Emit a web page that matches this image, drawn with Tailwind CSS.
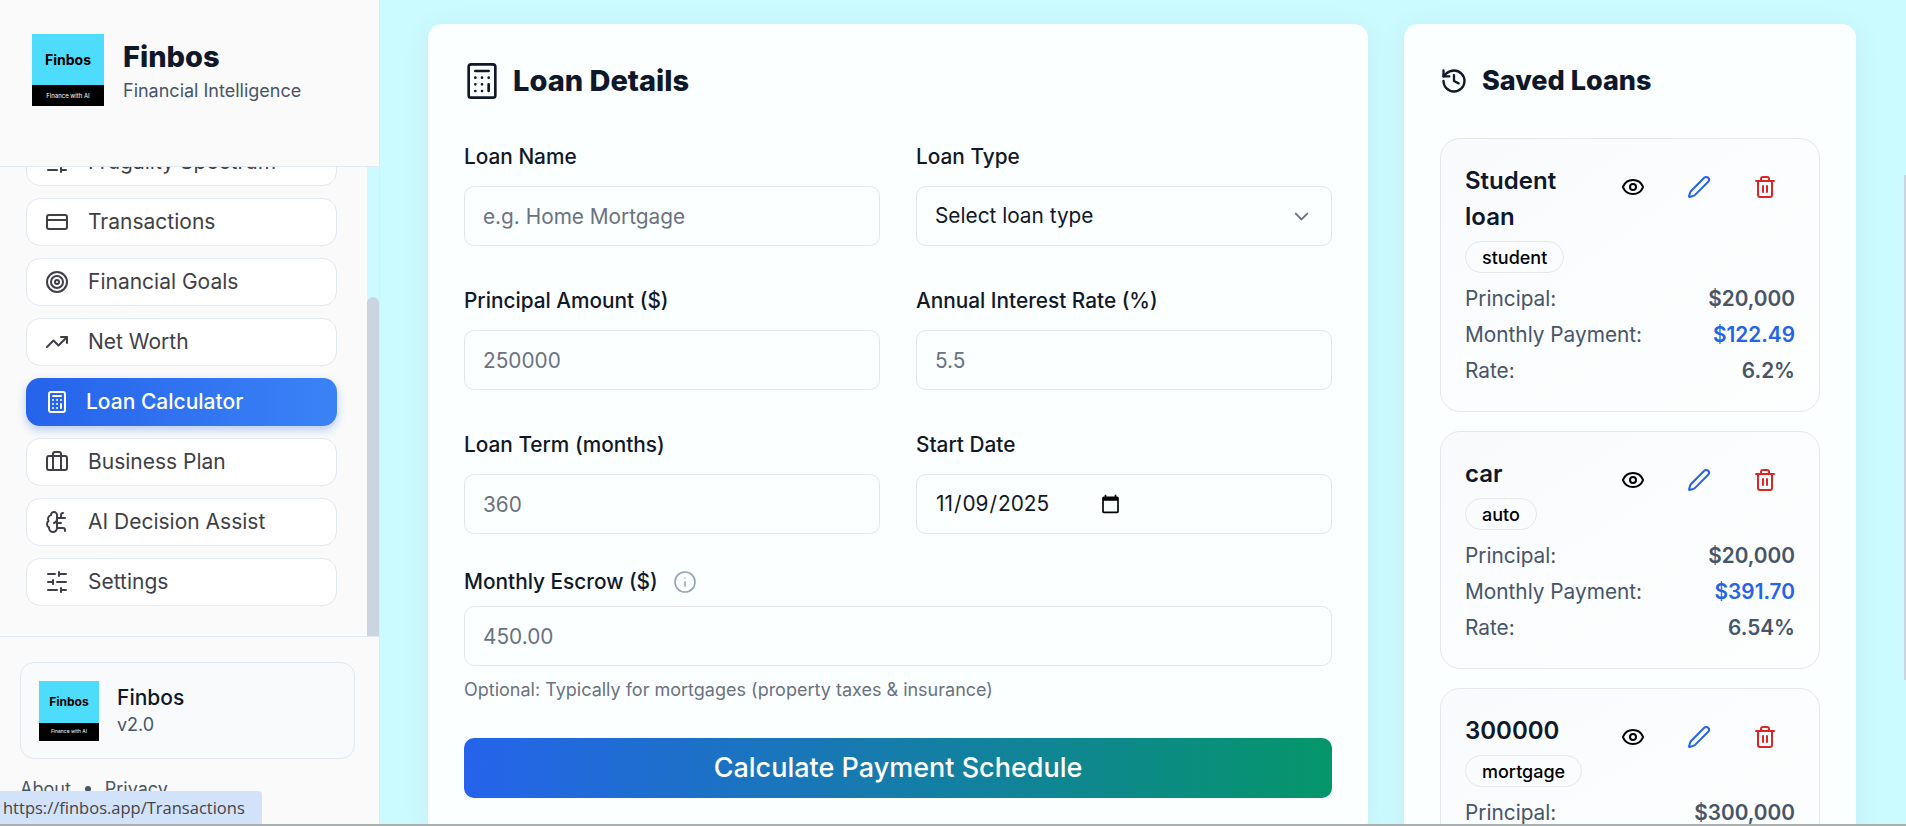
<!DOCTYPE html>
<html lang="en">
<head>
<meta charset="utf-8">
<title>Finbos Loan Calculator</title>
<script src="https://cdn.jsdelivr.net/npm/@tailwindcss/browser@4"></script>
</head>
<body class="h-screen overflow-hidden bg-[#ccfbff] font-['Inter',sans-serif]">
<div class="flex h-[824px] overflow-hidden">
  <aside class="flex flex-col w-[380px] shrink-0 h-full border-r border-[#e2e8f0] overflow-hidden">
    <div class="h-[167px] shrink-0 bg-[#fafafa] border-b border-[#e2e8f0] pt-[34px] pl-[32px] flex gap-[19px] z-10">
      <div class="w-[72px] h-[72px] flex flex-col shrink-0">
        <div class="h-[51px] bg-[#4ddcfb] flex items-center justify-center text-[14px] font-bold text-black">Finbos</div>
        <div class="h-[21px] bg-black flex items-center justify-center text-[6px] text-white">Finance with AI</div>
      </div>
      <div>
        <div class="text-[29px] leading-[38px] font-extrabold text-[#0f172a] mt-[4px]">Finbos</div>
        <div class="text-[18px] leading-[24px] text-[#475569] mt-[3px]">Financial Intelligence</div>
      </div>
    </div>
    <div class="flex-1 min-h-0 flex overflow-hidden">
      <nav class="w-[367px] shrink-0 bg-[#fafafa] overflow-hidden pl-[26px] pr-[30px]">
        <div class="flex flex-col gap-[12px] mt-[-29px] text-[21px] text-[#3f3f46]">
          <a class="h-[48px] rounded-[14px] bg-white border border-[#e2e8f0] flex items-center pl-[18px] gap-[19px]"><svg class="w-6 h-6" viewBox="0 0 24 24" fill="none" stroke="currentColor" stroke-width="2" stroke-linecap="round"><path d="M21 4h-7M10 4H3M21 12h-9M8 12H3M21 20h-5M12 20H3M14 2v4M8 10v4M16 18v4"/></svg>Frugality Spectrum</a>
          <a class="h-[48px] rounded-[14px] bg-white border border-[#e2e8f0] flex items-center pl-[18px] gap-[19px]"><svg class="w-6 h-6" viewBox="0 0 24 24" fill="none" stroke="currentColor" stroke-width="2" stroke-linecap="round"><rect x="2" y="5" width="20" height="14" rx="2"/><path d="M2 10h20"/></svg>Transactions</a>
          <a class="h-[48px] rounded-[14px] bg-white border border-[#e2e8f0] flex items-center pl-[18px] gap-[19px]"><svg class="w-6 h-6" viewBox="0 0 24 24" fill="none" stroke="currentColor" stroke-width="2"><circle cx="12" cy="12" r="10"/><circle cx="12" cy="12" r="6"/><circle cx="12" cy="12" r="2"/></svg>Financial Goals</a>
          <a class="h-[48px] rounded-[14px] bg-white border border-[#e2e8f0] flex items-center pl-[18px] gap-[19px]"><svg class="w-6 h-6" viewBox="0 0 24 24" fill="none" stroke="currentColor" stroke-width="2" stroke-linecap="round" stroke-linejoin="round"><path d="M22 7l-8.5 8.5-5-5L2 17"/><path d="M16 7h6v6"/></svg>Net Worth</a>
          <a class="h-[48px] rounded-[14px] bg-linear-to-r/srgb from-[#2563eb] to-[#3b82f6] shadow-[0_4px_10px_rgba(37,99,235,0.3)] text-white font-medium flex items-center pl-[19px] gap-[17px]"><svg class="w-6 h-6" viewBox="0 0 24 24" fill="none" stroke="currentColor" stroke-width="2" stroke-linecap="round"><rect x="4" y="2" width="16" height="20" rx="2"/><path d="M8 6h8M16 14v4M16 10h.01M12 10h.01M8 10h.01M12 14h.01M8 14h.01M12 18h.01M8 18h.01"/></svg>Loan Calculator</a>
          <a class="h-[48px] rounded-[14px] bg-white border border-[#e2e8f0] flex items-center pl-[18px] gap-[19px]"><svg class="w-6 h-6" viewBox="0 0 24 24" fill="none" stroke="currentColor" stroke-width="2"><path d="M16 20V4a2 2 0 0 0-2-2h-4a2 2 0 0 0-2 2v16"/><rect x="2" y="6" width="20" height="14" rx="2"/></svg>Business Plan</a>
          <a class="h-[48px] rounded-[14px] bg-white border border-[#e2e8f0] flex items-center pl-[18px] gap-[19px]"><svg class="w-6 h-6" viewBox="0 0 24 24" fill="none" stroke="currentColor" stroke-width="2" stroke-linecap="round" stroke-linejoin="round"><path d="M12 5a3 3 0 1 0-5.997.125 4 4 0 0 0-2.526 5.77 4 4 0 0 0 .556 6.588A4 4 0 1 0 12 18Z"/><path d="M9 13a4.5 4.5 0 0 0 3-4"/><path d="M12 13h4"/><path d="M12 18h6a2 2 0 0 1 2 2v1"/><path d="M12 8h8"/><path d="M16 8V5a2 2 0 0 1 2-2"/></svg>AI Decision Assist</a>
          <a class="h-[48px] rounded-[14px] bg-white border border-[#e2e8f0] flex items-center pl-[18px] gap-[19px]"><svg class="w-6 h-6" viewBox="0 0 24 24" fill="none" stroke="currentColor" stroke-width="2" stroke-linecap="round"><path d="M21 4h-7M10 4H3M21 12h-9M8 12H3M21 20h-5M12 20H3M14 2v4M8 10v4M16 18v4"/></svg>Settings</a>
        </div>
      </nav>
      <div class="w-[12px] shrink-0 pt-[130px]"><div class="h-full rounded-t-full rounded-b-[4px] bg-[#cbd5e1]"></div></div>
    </div>
    <div class="h-[188px] shrink-0 bg-[#fafafa] border-t border-[#e2e8f0] pt-[25px] pl-[20px] pr-[24px]">
      <div class="h-[97px] rounded-[14px] bg-[#f8fafc] border border-[#e2e8f0] flex items-center pl-[18px] gap-[18px]">
        <div class="w-[60px] h-[60px] flex flex-col shrink-0">
          <div class="h-[42px] bg-[#4ddcfb] flex items-center justify-center text-[12px] font-bold text-black">Finbos</div>
          <div class="h-[18px] bg-black flex items-center justify-center text-[5px] text-white">Finance with AI</div>
        </div>
        <div>
          <div class="text-[21px] leading-[28px] font-medium text-[#0f172a]">Finbos</div>
          <div class="text-[18px] leading-[26px] text-[#475569]">v2.0</div>
        </div>
      </div>
      <div class="mt-[17px] flex items-center gap-[14px] text-[18px] text-[#475569] leading-[26px]"><span>About</span><span class="w-[6px] h-[6px] rounded-full bg-[#475569]"></span><span>Privacy</span></div>
    </div>
  </aside>

  <main class="flex-1 min-w-0 pt-[24px] pl-[48px] flex items-start gap-[36px] overflow-hidden">
    <section class="w-[940px] shrink-0 rounded-[14px] bg-[#fbffff] shadow-[0_4px_30px_rgba(0,0,0,0.06)] p-[36px]">
      <h2 class="h-[42px] flex items-center gap-[11px] text-[29px] font-extrabold text-[#0f172a]">
        <svg class="w-[40px] h-[40px] ml-[-2px]" viewBox="0 0 24 24" fill="none" stroke="currentColor" stroke-width="1.6" stroke-linecap="round"><rect x="4" y="2" width="16" height="20" rx="1.5"/><path d="M8 6h8M16 14v4M16 10h.01M12 10h.01M8 10h.01M12 14h.01M8 14h.01M12 18h.01M8 18h.01"/></svg>
        Loan Details
      </h2>
      <div class="grid grid-cols-2 gap-x-[36px] gap-y-[41px] mt-[41px] text-[20.8px]">
        <div><label class="block h-[28px] mb-[15px] font-medium text-[#111827] leading-[28px]">Loan Name</label><input type="text" placeholder="e.g. Home Mortgage" class="w-full h-[60px] rounded-[10px] border border-[#e5e7eb] bg-[#fbffff] px-[18px] text-[20.8px] placeholder:text-[#6b7280]"></div>
        <div><label class="block h-[28px] mb-[15px] font-medium text-[#111827] leading-[28px]">Loan Type</label>
          <div class="w-full h-[60px] rounded-[10px] border border-[#e5e7eb] flex items-center justify-between px-[18px] text-[20.8px] text-[#111827]"><span>Select loan type</span><svg class="w-[23px] h-[23px] text-[#6b7280]" viewBox="0 0 24 24" fill="none" stroke="currentColor" stroke-width="2" stroke-linecap="round" stroke-linejoin="round"><path d="m6 9 6 6 6-6"/></svg></div></div>
        <div><label class="block h-[28px] mb-[15px] font-medium text-[#111827] leading-[28px]">Principal Amount ($)</label><input type="text" placeholder="250000" class="w-full h-[60px] rounded-[10px] border border-[#e5e7eb] bg-[#fbffff] px-[18px] text-[20.8px] placeholder:text-[#6b7280]"></div>
        <div><label class="block h-[28px] mb-[15px] font-medium text-[#111827] leading-[28px]">Annual Interest Rate (%)</label><input type="text" placeholder="5.5" class="w-full h-[60px] rounded-[10px] border border-[#e5e7eb] bg-[#fbffff] px-[18px] text-[20.8px] placeholder:text-[#6b7280]"></div>
        <div><label class="block h-[28px] mb-[15px] font-medium text-[#111827] leading-[28px]">Loan Term (months)</label><input type="text" placeholder="360" class="w-full h-[60px] rounded-[10px] border border-[#e5e7eb] bg-[#fbffff] px-[18px] text-[20.8px] placeholder:text-[#6b7280]"></div>
        <div><label class="block h-[28px] mb-[15px] font-medium text-[#111827] leading-[28px]">Start Date</label><input type="date" value="2025-11-09" class="w-full h-[60px] rounded-[10px] border border-[#e5e7eb] bg-[#fbffff] px-[18px] text-[20.8px] text-[#111827] [&::-webkit-calendar-picker-indicator]:mr-[190px]"></div>
      </div>
      <div class="mt-[34px] text-[20.8px]">
        <label class="h-[28px] mb-[10px] font-medium text-[#111827] leading-[28px] flex items-center gap-[15px]">Monthly Escrow ($)<svg class="w-[24px] h-[24px] text-[#94a3b8]" viewBox="0 0 24 24" fill="none" stroke="currentColor" stroke-width="1.6" stroke-linecap="round"><circle cx="12" cy="12" r="10"/><path d="M12 16v-4M12 8h.01"/></svg></label>
        <input type="text" placeholder="450.00" class="w-full h-[60px] rounded-[10px] border border-[#e5e7eb] bg-[#fbffff] px-[18px] text-[20.8px] placeholder:text-[#6b7280]">
        <p class="mt-[12px] text-[18px] leading-[24px] text-[#6b7280]">Optional: Typically for mortgages (property taxes &amp; insurance)</p>
      </div>
      <button class="mt-[36px] w-full h-[60px] rounded-[10px] bg-linear-to-r/srgb from-[#2563eb] to-[#059669] text-white text-[27px] font-medium">Calculate Payment Schedule</button>
    </section>

    <section class="w-[452px] shrink-0 rounded-[14px] bg-[#fbffff] shadow-[0_4px_30px_rgba(0,0,0,0.06)] px-[36px] pt-[36px] h-[900px]">
      <h2 class="h-[42px] flex items-center gap-[14px] text-[27px] font-extrabold text-[#0f172a]">
        <svg class="w-[28px] h-[28px]" viewBox="0 0 24 24" fill="none" stroke="currentColor" stroke-width="2" stroke-linecap="round" stroke-linejoin="round"><path d="M3 12a9 9 0 1 0 9-9 9.75 9.75 0 0 0-6.74 2.74L3 8"/><path d="M3 3v5h5"/><path d="M12 7v5l4 2"/></svg>
        Saved Loans
      </h2>
      <div class="flex flex-col gap-[19px] mt-[36px]">
        <div class="rounded-[20px] border border-[#e5e7eb] bg-gradient-to-br from-[#f9fafc] to-[#fdffff] px-[24px] pt-[24px] pb-[22px]">
          <div class="flex items-start justify-between">
            <div class="w-[120px] text-[24px] leading-[36px] font-semibold text-[#0f172a]">Student loan</div>
            <div class="flex gap-[18px] mr-[6px]">
              <button class="w-[48px] h-[48px] flex items-center justify-center text-black"><svg class="w-[24px] h-[24px]" viewBox="0 0 24 24" fill="none" stroke="currentColor" stroke-width="2"><path d="M2.062 12.348a1 1 0 0 1 0-.696 10.75 10.75 0 0 1 19.876 0 1 1 0 0 1 0 .696 10.75 10.75 0 0 1-19.876 0"/><circle cx="12" cy="12" r="3"/></svg></button>
              <button class="w-[48px] h-[48px] flex items-center justify-center text-[#2563eb]"><svg class="w-[24px] h-[24px]" viewBox="0 0 24 24" fill="none" stroke="currentColor" stroke-width="2" stroke-linejoin="round"><path d="M21.174 6.812a1 1 0 0 0-3.986-3.987L3.842 16.174a2 2 0 0 0-.5.83l-1.321 4.352a.5.5 0 0 0 .623.622l4.353-1.32a2 2 0 0 0 .83-.497z"/></svg></button>
              <button class="w-[48px] h-[48px] flex items-center justify-center text-[#dc2626]"><svg class="w-[24px] h-[24px]" viewBox="0 0 24 24" fill="none" stroke="currentColor" stroke-width="2" stroke-linecap="round"><path d="M3 6h18M19 6v14c0 1-1 2-2 2H7c-1 0-2-1-2-2V6M8 6V4c0-1 1-2 2-2h4c1 0 2 1 2 2v2M10 11v6M14 11v6"/></svg></button>
            </div>
          </div>
          <span class="inline-flex h-[32px] items-center rounded-full border border-[#e5e7eb] px-[16px] text-[18px] font-medium text-black mt-[6px]">student</span>
          <div class="mt-[8px] text-[20.8px] leading-[36px]">
            <div class="flex justify-between"><span class="text-[#475569]">Principal:</span><span class="font-semibold text-[#475569]">$20,000</span></div>
            <div class="flex justify-between"><span class="text-[#475569]">Monthly Payment:</span><span class="font-semibold text-[#2563eb]">$122.49</span></div>
            <div class="flex justify-between"><span class="text-[#475569]">Rate:</span><span class="font-semibold text-[#475569]">6.2%</span></div>
          </div>
        </div>
        <div class="rounded-[20px] border border-[#e5e7eb] bg-gradient-to-br from-[#f9fafc] to-[#fdffff] px-[24px] pt-[24px] pb-[22px]">
          <div class="flex items-start justify-between h-[36px]">
            <div class="w-[120px] text-[24px] leading-[36px] font-semibold text-[#0f172a]">car</div>
            <div class="flex gap-[18px] mr-[6px]">
              <button class="w-[48px] h-[48px] flex items-center justify-center text-black"><svg class="w-[24px] h-[24px]" viewBox="0 0 24 24" fill="none" stroke="currentColor" stroke-width="2"><path d="M2.062 12.348a1 1 0 0 1 0-.696 10.75 10.75 0 0 1 19.876 0 1 1 0 0 1 0 .696 10.75 10.75 0 0 1-19.876 0"/><circle cx="12" cy="12" r="3"/></svg></button>
              <button class="w-[48px] h-[48px] flex items-center justify-center text-[#2563eb]"><svg class="w-[24px] h-[24px]" viewBox="0 0 24 24" fill="none" stroke="currentColor" stroke-width="2" stroke-linejoin="round"><path d="M21.174 6.812a1 1 0 0 0-3.986-3.987L3.842 16.174a2 2 0 0 0-.5.83l-1.321 4.352a.5.5 0 0 0 .623.622l4.353-1.32a2 2 0 0 0 .83-.497z"/></svg></button>
              <button class="w-[48px] h-[48px] flex items-center justify-center text-[#dc2626]"><svg class="w-[24px] h-[24px]" viewBox="0 0 24 24" fill="none" stroke="currentColor" stroke-width="2" stroke-linecap="round"><path d="M3 6h18M19 6v14c0 1-1 2-2 2H7c-1 0-2-1-2-2V6M8 6V4c0-1 1-2 2-2h4c1 0 2 1 2 2v2M10 11v6M14 11v6"/></svg></button>
            </div>
          </div>
          <span class="inline-flex h-[32px] items-center rounded-full border border-[#e5e7eb] px-[16px] text-[18px] font-medium text-black mt-[6px]">auto</span>
          <div class="mt-[8px] text-[20.8px] leading-[36px]">
            <div class="flex justify-between"><span class="text-[#475569]">Principal:</span><span class="font-semibold text-[#475569]">$20,000</span></div>
            <div class="flex justify-between"><span class="text-[#475569]">Monthly Payment:</span><span class="font-semibold text-[#2563eb]">$391.70</span></div>
            <div class="flex justify-between"><span class="text-[#475569]">Rate:</span><span class="font-semibold text-[#475569]">6.54%</span></div>
          </div>
        </div>
        <div class="rounded-[20px] border border-[#e5e7eb] bg-gradient-to-br from-[#f9fafc] to-[#fdffff] px-[24px] pt-[24px] pb-[80px]">
          <div class="flex items-start justify-between h-[36px]">
            <div class="w-[120px] text-[24px] leading-[36px] font-semibold text-[#0f172a]">300000</div>
            <div class="flex gap-[18px] mr-[6px]">
              <button class="w-[48px] h-[48px] flex items-center justify-center text-black"><svg class="w-[24px] h-[24px]" viewBox="0 0 24 24" fill="none" stroke="currentColor" stroke-width="2"><path d="M2.062 12.348a1 1 0 0 1 0-.696 10.75 10.75 0 0 1 19.876 0 1 1 0 0 1 0 .696 10.75 10.75 0 0 1-19.876 0"/><circle cx="12" cy="12" r="3"/></svg></button>
              <button class="w-[48px] h-[48px] flex items-center justify-center text-[#2563eb]"><svg class="w-[24px] h-[24px]" viewBox="0 0 24 24" fill="none" stroke="currentColor" stroke-width="2" stroke-linejoin="round"><path d="M21.174 6.812a1 1 0 0 0-3.986-3.987L3.842 16.174a2 2 0 0 0-.5.83l-1.321 4.352a.5.5 0 0 0 .623.622l4.353-1.32a2 2 0 0 0 .83-.497z"/></svg></button>
              <button class="w-[48px] h-[48px] flex items-center justify-center text-[#dc2626]"><svg class="w-[24px] h-[24px]" viewBox="0 0 24 24" fill="none" stroke="currentColor" stroke-width="2" stroke-linecap="round"><path d="M3 6h18M19 6v14c0 1-1 2-2 2H7c-1 0-2-1-2-2V6M8 6V4c0-1 1-2 2-2h4c1 0 2 1 2 2v2M10 11v6M14 11v6"/></svg></button>
            </div>
          </div>
          <span class="inline-flex h-[32px] items-center rounded-full border border-[#e5e7eb] px-[16px] text-[18px] font-medium text-black mt-[6px]">mortgage</span>
          <div class="mt-[8px] text-[20.8px] leading-[36px]">
            <div class="flex justify-between"><span class="text-[#475569]">Principal:</span><span class="font-semibold text-[#475569]">$300,000</span></div>
          </div>
        </div>
      </div>
    </section>
  </main>
</div>
<div class="h-[2px] bg-[#aab0b0]"></div>
<div class="absolute left-0 top-[791px] h-[33px] w-[262px] bg-[#d3e2fb] rounded-tr-[4px] pl-[3px] text-[16.5px] leading-[33px] text-[#444] font-['Open_Sans',sans-serif]">https://finbos.app/Transactions</div>
<div class="absolute right-0 top-[175px] h-[505px] w-[2px] bg-[#cbd5e1]"></div>
</body>
</html>
